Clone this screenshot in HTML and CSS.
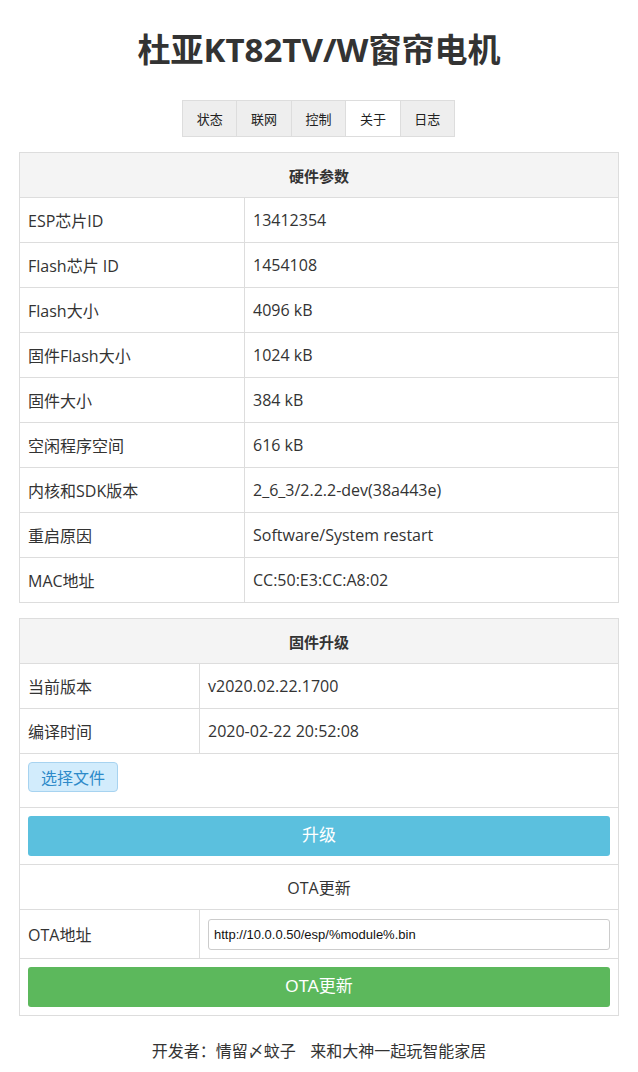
FILE: index.html
```html
<!DOCTYPE html>
<html lang="zh">
<head>
<meta charset="utf-8">
<title>杜亚KT82TV/W窗帘电机</title>
<link rel="stylesheet" href="styles.css">
</head>
<body>
<div class="page">
  <h1 class="title">杜亚KT82TV/W窗帘电机</h1>
  <div class="tabs">
    <div class="tab">状态</div>
    <div class="tab">联网</div>
    <div class="tab">控制</div>
    <div class="tab active">关于</div>
    <div class="tab">日志</div>
  </div>

  <table class="grid hw">
    <tr><th colspan="2">硬件参数</th></tr>
    <tr><td class="lab">ESP芯片ID</td><td>13412354</td></tr>
    <tr><td class="lab">Flash芯片 ID</td><td>1454108</td></tr>
    <tr><td class="lab">Flash大小</td><td>4096 kB</td></tr>
    <tr><td class="lab">固件Flash大小</td><td>1024 kB</td></tr>
    <tr><td class="lab">固件大小</td><td>384 kB</td></tr>
    <tr><td class="lab">空闲程序空间</td><td>616 kB</td></tr>
    <tr><td class="lab">内核和SDK版本</td><td>2_6_3/2.2.2-dev(38a443e)</td></tr>
    <tr><td class="lab">重启原因</td><td>Software/System restart</td></tr>
    <tr><td class="lab">MAC地址</td><td>CC:50:E3:CC:A8:02</td></tr>
  </table>

  <table class="grid fw">
    <tr><th colspan="2">固件升级</th></tr>
    <tr><td class="lab">当前版本</td><td>v2020.02.22.1700</td></tr>
    <tr><td class="lab">编译时间</td><td>2020-02-22 20:52:08</td></tr>
    <tr><td colspan="2" class="filecell"><span class="filebtn">选择文件</span></td></tr>
    <tr><td colspan="2" class="btncell"><div class="btn btn-info">升级</div></td></tr>
    <tr><td colspan="2" class="center">OTA更新</td></tr>
    <tr><td class="lab">OTA地址</td><td class="inputcell"><div class="input">http://10.0.0.50/esp/%module%.bin</div></td></tr>
    <tr><td colspan="2" class="btncell"><div class="btn btn-success">OTA更新</div></td></tr>
  </table>

  <p class="footer">开发者：情留〆蚊子&nbsp;&nbsp;&nbsp;&nbsp;来和大神一起玩智能家居</p>
</div>
</body>
</html>
```

FILE: styles.css
```css
html, body {
  margin: 0;
  padding: 0;
  background: #fff;
}
body {
  font-family: "Open Sans", "Noto Sans CJK SC", sans-serif;
  font-size: 16px;
  color: #333;
}
.page {
  width: 600px;
  margin: 0 auto;
  padding-top: 26px;
}
.title {
  margin: 0;
  text-align: center;
  font-size: 33px;
  font-weight: 700;
  line-height: 48px;
  color: #333;
}
.tabs {
  display: flex;
  justify-content: center;
  margin-top: 26px;
}
.tab {
  width: 53.4px;
  height: 35px;
  line-height: 35px;
  text-align: center;
  font-size: 13px;
  font-family: "Noto Sans CJK SC", sans-serif;
  background: #eee;
  border: 1px solid #ddd;
  margin-left: -1px;
  color: #222;
}
.tab.active {
  background: #fff;
}
.grid {
  width: 600px;
  border-collapse: collapse;
  margin-top: 15px;
}
.grid th, .grid td {
  border: 1px solid #ddd;
  height: 44px;
  padding: 0 8px;
  text-align: left;
  font-weight: 400;
}
.grid th {
  background: #f4f4f4;
  text-align: center;
  font-weight: 700;
  font-size: 15px;
  font-family: "Noto Sans CJK SC", sans-serif;
}
.hw .lab { width: 208px; }
.fw .lab { width: 163px; }
.center { text-align: center !important; }
.grid td.filecell {
  height: 54px;
  vertical-align: top;
  padding-top: 8px;
  box-sizing: border-box;
}
.filebtn {
  display: inline-block;
  height: 28px;
  line-height: 28px;
  padding: 0 12px;
  background: #d2ecfc;
  border: 1px solid #a7d3f0;
  border-radius: 4px;
  color: #2d8ac9;
  font-size: 16px;
  font-family: "Noto Sans CJK SC", sans-serif;
}
.btncell { height: 56px !important; }
.btn {
  height: 40px;
  line-height: 40px;
  text-align: center;
  color: #fff;
  border-radius: 3px;
  font-size: 17px;
  font-family: "Liberation Sans", "Noto Sans CJK SC", sans-serif;
}
.btn-info { background: #5bc0de; }
.btn-success { background: #5cb85c; }
.inputcell { height: 48px !important; }
.input {
  height: 29px;
  line-height: 29px;
  border: 1px solid #ccc;
  border-radius: 3px;
  padding: 0 5px;
  font-size: 13px;
  font-family: "Liberation Sans", sans-serif;
  color: #111;
}
.footer {
  text-align: center;
  margin: 22px 0 0;
  font-size: 16px;
  font-family: "Noto Sans CJK SC", sans-serif;
  color: #333;
}
```
